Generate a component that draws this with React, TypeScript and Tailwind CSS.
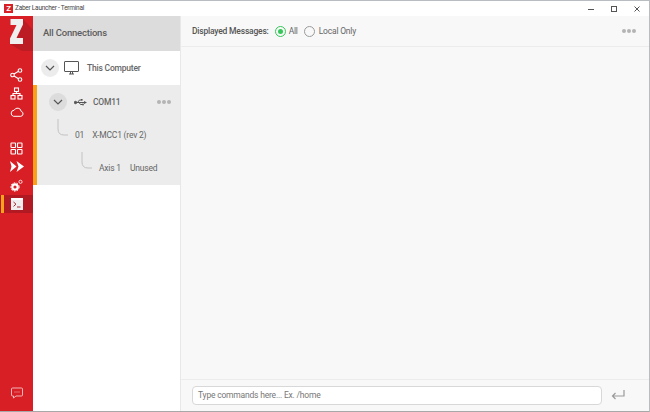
import React from "react";

const Dots = ({ c = "bg-[#b4b4b4]" }: { c?: string }) => (
  <div className="flex gap-[1px]">
    <span className={`w-[4px] h-[4px] rounded-full ${c}`} />
    <span className={`w-[4px] h-[4px] rounded-full ${c}`} />
    <span className={`w-[4px] h-[4px] rounded-full ${c}`} />
  </div>
);

const Chevron = () => (
  <svg width="10" height="6" viewBox="0 0 10 6" fill="none" stroke="#555" strokeWidth="1.2">
    <path d="M1 1l4 4 4-4" />
  </svg>
);

const Elbow = () => (
  <svg width="11" height="18" viewBox="0 0 11 18" fill="none" stroke="#c2c2c2" strokeWidth="1">
    <path d="M1 0v10q0 6 6 6h4" />
  </svg>
);

const NavIcon = ({ children, active }: { children: React.ReactNode; active?: boolean }) => (
  <div className={`h-[18.5px] w-full flex items-center justify-center relative ${active ? "bg-[#b21a23]" : ""}`}>
    {active && <span className="absolute left-[1px] top-0 bottom-0 w-[3px] bg-[#f9a11b]" />}
    {children}
  </div>
);

export default function App() {
  return (
    <div className="w-[650px] h-[412px] flex flex-col bg-white overflow-hidden border-t border-r border-b border-t-[#b9bcc0] border-r-[#b9bcc0] border-b-[#a8a8a8] text-[#666] text-[8.5px] tracking-[-0.2px]" style={{ fontFamily: "Roboto, sans-serif" }}>
      {/* Title bar */}
      <div className="h-[15px] shrink-0 flex items-center bg-white">
        <div className="ml-[4px] w-[9px] h-[9px] bg-[#d81f26] flex items-center justify-center text-white text-[8px] font-bold leading-none">Z</div>
        <span className="ml-[2px] text-[6.5px] tracking-[-0.25px] text-[#444]">Zaber Launcher - Terminal</span>
        <div className="ml-auto flex items-center">
          <svg width="100" height="14" viewBox="0 0 100 14" fill="none" stroke="#555" strokeWidth="1">
            <path d="M39 7.500h6" />
            <rect x="62.500" y="4.500" width="5" height="5" />
            <path d="M85.500 4.500l5 5M90.500 4.500l-5 5" />
          </svg>
        </div>
      </div>
      <div className="flex flex-1 min-h-0">
        {/* Sidebar */}
        <div className="w-[33px] shrink-0 bg-[#d81f26] flex flex-col items-center relative overflow-hidden">
          <div className="h-[35px] w-full relative flex items-center justify-center overflow-hidden">
            <svg width="33" height="35" viewBox="0 0 33 35" className="absolute inset-0">
              <path d="M23 3L33 14V35H22L10 28z" fill="#bc1c24" />
              <path d="M10.500 3h12.500v5.500l-6.500 13.500h6.500v6H10v-5.500l6.500-13.500H10.500z" fill="#efeff0" />
            </svg>
          </div>
          <div className="mt-[15px] flex flex-col w-full">
            <NavIcon>
              <svg width="13" height="14" viewBox="0 0 13 14" fill="none" stroke="#fff" strokeWidth="1.100">
                <circle cx="2.500" cy="7" r="1.800" /><circle cx="10" cy="2.500" r="1.800" /><circle cx="10" cy="11.500" r="1.800" />
                <path d="M4 6l4.500-2.700M4 8l4.500 2.700" />
              </svg>
            </NavIcon>
            <NavIcon>
              <svg width="13" height="13" viewBox="0 0 13 13" fill="none" stroke="#fff" strokeWidth="1.100">
                <rect x="4.500" y="1" width="4" height="3.500" /><rect x="1" y="8.500" width="4" height="3.500" /><rect x="8" y="8.500" width="4" height="3.500" />
                <path d="M6.500 4.500v2M3 8.500v-2h7v2" />
              </svg>
            </NavIcon>
            <NavIcon>
              <svg width="14" height="10" viewBox="0 0 14 10" fill="none" stroke="#fff" strokeWidth="1">
                <path d="M3.500 9.300h7.300a2.500 2.500 0 0 0 .4-4.900 3.700 3.700 0 0 0-7-1.200 3.100 3.100 0 0 0-.7 6.100z" />
              </svg>
            </NavIcon>
          </div>
          <div className="mt-[17.500px] flex flex-col w-full">
            <NavIcon>
              <svg width="13" height="13" viewBox="0 0 13 13" fill="none" stroke="#fff" strokeWidth="1.100">
                <rect x="1" y="1" width="4.500" height="4.500" rx=".5" /><rect x="7.500" y="1" width="4.500" height="4.500" rx=".5" />
                <rect x="1" y="7.500" width="4.500" height="4.500" rx=".5" /><rect x="7.500" y="7.500" width="4.500" height="4.500" rx=".5" />
              </svg>
            </NavIcon>
            <NavIcon>
              <svg width="14" height="11" viewBox="0 0 14 11" fill="#fff">
                <path d="M0 0l6.500 5.500L0 11l1.500-5.500zM6.500 0L14 5.500 6.500 11l2-5.500z" />
              </svg>
            </NavIcon>
            <NavIcon>
              <svg width="13" height="13" viewBox="0 0 13 13" fill="none">
                <circle cx="5" cy="8" r="2.700" stroke="#fff" strokeWidth="2.200" />
                <circle cx="5" cy="8" r="4.200" stroke="#fff" strokeWidth="1" strokeDasharray="1.500 1.500" />
                <circle cx="10.500" cy="2.800" r="1.600" stroke="#fff" strokeWidth=".8" />
              </svg>
            </NavIcon>
            <NavIcon active>
              <svg width="12" height="12" viewBox="0 0 12 12">
                <rect width="12" height="12" fill="#efeff0" />
                <rect width="12" height="2" fill="#fff" />
                <path d="M2.500 4l2.500 2.200-2.500 2.200" fill="none" stroke="#a92a30" strokeWidth="1" />
                <path d="M6 9h3.500" stroke="#a92a30" strokeWidth="1" />
              </svg>
            </NavIcon>
          </div>
          <div className="mt-auto mb-[12px]">
            <svg width="12" height="12" viewBox="0 0 12 12" fill="none" stroke="#f6c6c8" strokeWidth=".9">
              <path d="M1.500 1h9a1 1 0 0 1 1 1v6a1 1 0 0 1-1 1H5l-2.500 2V9h-1a1 1 0 0 1-1-1V2a1 1 0 0 1 1-1z" />
              <path d="M3.500 5h1M5.500 5h1M7.500 5h1" />
            </svg>
          </div>
        </div>
        {/* Connections panel */}
        <div className="w-[148px] shrink-0 flex flex-col bg-white border-r border-[#e8e8e8]">
          <div className="h-[35px] shrink-0 bg-[#dcdcdc] flex items-center pl-[10px] text-[9.500px] font-medium text-[#5c5c5c]">All Connections</div>
          <div className="h-[34px] shrink-0 flex items-center pl-[8px]">
            <div className="w-[18px] h-[18px] rounded-full bg-[#ececec] flex items-center justify-center"><Chevron /></div>
            <svg className="ml-[5px]" width="15" height="14" viewBox="0 0 15 14" fill="none" stroke="#555" strokeWidth="1">
              <rect x=".5" y=".5" width="14" height="10" rx=".5" />
              <path d="M5 13h5M6.500 11v2M8.500 11v2" />
            </svg>
            <span className="ml-[8px] font-medium text-[#666]">This Computer</span>
          </div>
          <div className="h-[100px] shrink-0 bg-[#ececec] border-l-[4px] border-[#f9a11b] flex flex-col relative">
            <div className="h-[34px] flex items-center pl-[12px]">
              <div className="w-[18px] h-[18px] rounded-full bg-[#dcdcdc] flex items-center justify-center"><Chevron /></div>
              <svg className="ml-[7px]" width="13" height="9" viewBox="0 0 13 9" fill="none" stroke="#555" strokeWidth="1">
                <circle cx="1.500" cy="4.500" r="1.200" fill="#555" />
                <path d="M2 4.500h8" />
                <path d="M3.500 4.500l2-2.500h2M5 4.500l1.500 2h2" />
                <rect x="7" y="1" width="1.600" height="1.600" fill="#555" stroke="none" />
                <circle cx="9" cy="6.500" r=".9" fill="#555" stroke="none" />
                <path d="M10 3l3 1.500-3 1.500z" fill="#555" stroke="none" />
              </svg>
              <span className="ml-[6px] font-medium text-[#666]">COM11</span>
              <div className="ml-auto mr-[9px]"><Dots /></div>
            </div>
            <div className="h-[33px] flex items-center pl-[20px] relative">
              <span className="absolute left-[20px] top-0"><Elbow /></span>
              <span className="ml-[18px]">01</span>
              <span className="ml-[8px]">X-MCC1 (rev 2)</span>
            </div>
            <div className="h-[33px] flex items-center pl-[44px] relative">
              <span className="absolute left-[44px] top-0"><Elbow /></span>
              <span className="ml-[18px]">Axis 1</span>
              <span className="ml-[9px]">Unused</span>
            </div>
          </div>
        </div>
        {/* Terminal panel */}
        <div className="flex-1 min-w-0 flex flex-col bg-[#f8f8f8]">
          <div className="h-[31px] shrink-0 flex items-center pl-[11px] pr-[13px] border-b border-[#ececec]">
            <span className="font-medium text-[#555]">Displayed Messages:</span>
            <span className="ml-[6px] w-[11px] h-[11px] rounded-full border border-[#35c759] flex items-center justify-center">
              <span className="w-[5px] h-[5px] rounded-full bg-[#35c759]" />
            </span>
            <span className="ml-[3px]">All</span>
            <span className="ml-[6px] w-[11px] h-[11px] rounded-full border border-[#9a9a9a]" />
            <span className="ml-[4px]">Local Only</span>
            <div className="ml-auto"><Dots /></div>
          </div>
          <div className="flex-1" />
          <div className="h-[32px] shrink-0 flex items-center pl-[11px] pb-[1px] border-t border-[#ececec]">
            <div className="w-[410px] h-[19px] bg-white border border-[#d8d8d8] rounded-[4px] flex items-center pl-[5px] text-[#777]">Type commands here... Ex. /home</div>
            <svg className="ml-[9px]" width="14" height="12" viewBox="0 0 14 12" fill="none" stroke="#9a9a9a" strokeWidth="1.200">
              <path d="M13 1v6H1.500M4.500 4l-3 3 3 3" />
            </svg>
          </div>
        </div>
      </div>
    </div>
  );
}
